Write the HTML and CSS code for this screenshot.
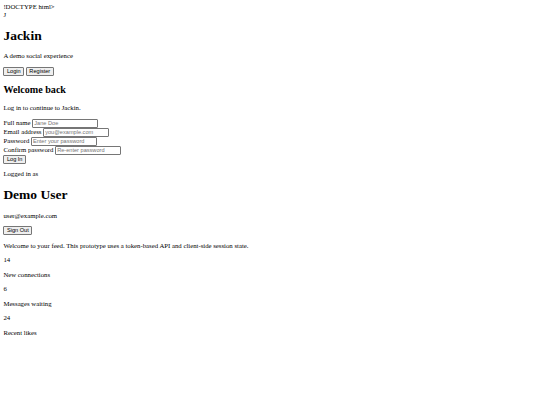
FILE: index.html
```html
<!DOCTYPE html>
<html>
<head>
<meta charset="utf-8">
<title>Jackin</title>
<link rel="stylesheet" href="styles.css">
</head>
<body class="doc">
<div class="stray">!DOCTYPE html&gt;</div>
<div class="stray">J</div>
<header>
<h1>Jackin</h1>
<p>A demo social experience</p>
<div class="tabs"><button class="btn">Login</button> <button class="btn">Register</button></div>
</header>
<section>
<h2>Welcome back</h2>
<p>Log in to continue to Jackin.</p>
<form class="form">
<label class="row">Full name <input class="field" type="text" placeholder="Jane Doe"></label>
<label class="row">Email address <input class="field" type="email" placeholder="you@example.com"></label>
<label class="row">Password <input class="field" type="password" placeholder="Enter your password"></label>
<label class="row">Confirm password <input class="field" type="password" placeholder="Re-enter password"></label>
<button class="btn" type="button">Log In</button>
</form>
</section>
<section>
<p>Logged in as</p>
<h1>Demo User</h1>
<p>user@example.com</p>
<button class="btn">Sign Out</button>
<p>Welcome to your feed. This prototype uses a token-based API and client-side session state.</p>
<div class="stats">
<div class="stat"><p>14</p><p>New connections</p></div>
<div class="stat"><p>6</p><p>Messages waiting</p></div>
<div class="stat"><p>24</p><p>Recent likes</p></div>
</div>
</section>
</body>
</html>
```
FILE: styles.css
```css
html {
  background: #ffffff;
}
.doc {
  margin: 3.375px;
  font-family: "Liberation Serif", "Times New Roman", serif;
  font-size: 6.75px;
  line-height: 1.15;
  color: #000000;
}
.btn, .field {
  font-family: "Liberation Sans", Arial, sans-serif;
  font-size: 5.625px;
  line-height: normal;
  margin: 0;
}
.btn {
  padding: 0.42px 2.53px;
  border: 1px solid #767676;
  border-radius: 1px;
  background: #efefef;
  color: #000000;
}
.field {
  box-sizing: border-box;
  width: 66px;
  height: 9px;
  padding: 0 1px;
  border: 1px solid #767676;
  border-radius: 1px;
  vertical-align: middle;
}
.field::placeholder {
  color: #757575;
}
.row {
  display: block;
}
```
